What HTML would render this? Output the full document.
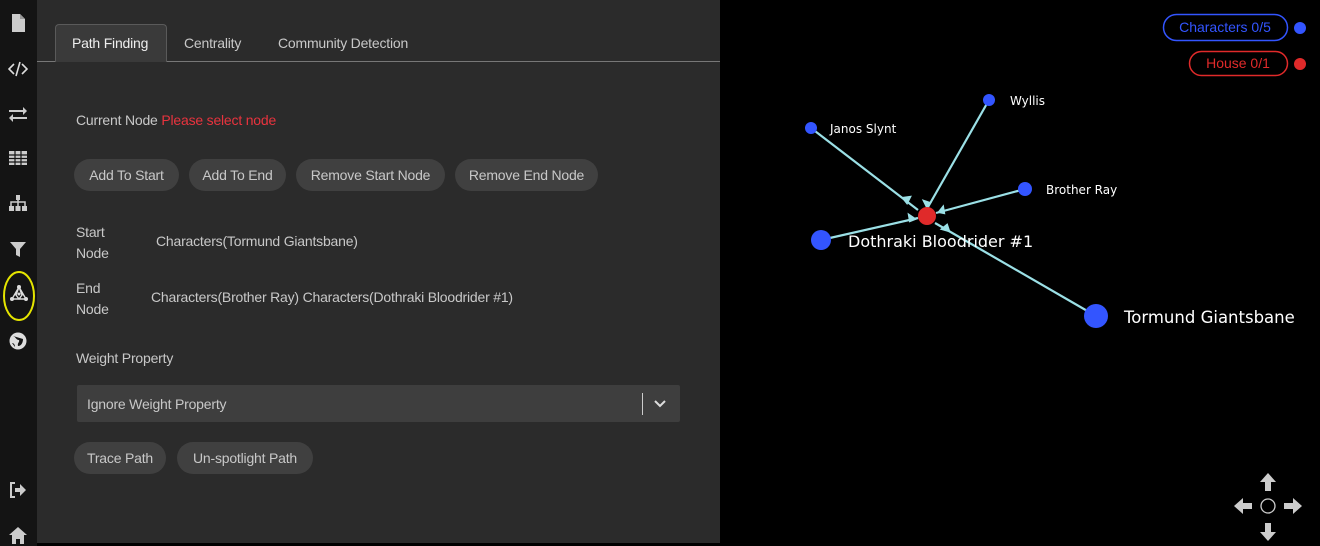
<!DOCTYPE html>
<html><head><style>
*{margin:0;padding:0;box-sizing:border-box}
body{width:1320px;height:546px;background:#000;font-family:"Liberation Sans",sans-serif;position:relative;overflow:hidden;color:#ccc}
#side{position:absolute;left:0;top:0;width:37px;height:546px;background:#141414}
#panel{position:absolute;left:37px;top:0;width:683px;height:543px;background:#2b2b2b}
.abs{position:absolute}
.btn{position:absolute;height:32px;border-radius:16px;background:#404040;color:#c8c8c8;font-size:14px;line-height:32px;text-align:center;letter-spacing:-0.2px}
.t{position:absolute;font-size:14px;color:#c8c8c8;white-space:nowrap;letter-spacing:-0.2px}
.ic{position:absolute;left:8px;width:20px;height:20px}
</style></head><body>
<div id="side">
<svg class="ic" style="top:13px" viewBox="0 0 20 20"><path d="M4 1h8l5 5v13H4z" fill="#ccc"/><path d="M12 1v5h5" fill="#999"/></svg>
<svg class="ic" style="top:59px" viewBox="0 0 20 20" fill="none" stroke="#ddd" stroke-width="1.6"><path d="M6 5L1 10l5 5M14 5l5 5-5 5M12 3L8 17"/></svg>
<svg class="ic" style="top:104px" viewBox="0 0 20 20" fill="#ccc"><path d="M1 6h14v-3l4 4-4 4v-3H1zM19 13H5v-3l-4 4 4 4v-3h14z"/></svg>
<svg class="ic" style="top:148px" viewBox="0 0 20 20" fill="#ccc"><path d="M1 3h18v14H1z"/><path d="M1 7h18M1 10.5h18M1 14h18M7 3v14M13 3v14" stroke="#141414" stroke-width="1.2"/></svg>
<svg class="ic" style="top:194px" viewBox="0 0 20 20" fill="#ccc"><rect x="8" y="1" width="4" height="5"/><path d="M3 12V8h14v4" fill="none" stroke="#ccc" stroke-width="1.5"/><path d="M10 6v6" stroke="#ccc" stroke-width="1.5"/><rect x="1" y="12" width="5" height="5"/><rect x="7.5" y="12" width="5" height="5"/><rect x="14" y="12" width="5" height="5"/></svg>
<svg class="ic" style="top:239px" viewBox="0 0 20 20" fill="#ccc"><path d="M2 3h16l-6 7v8l-4-2v-6z"/></svg>
<svg class="abs" style="left:2px;top:270px" width="36" height="52"><ellipse cx="17" cy="26" rx="15" ry="24" fill="none" stroke="#e5e500" stroke-width="2"/><g fill="none" stroke="#ddd" stroke-width="1.4"><path d="M17 17L10 29h14zM17 17l-3 8 3 4 3-4z"/></g><g fill="#ddd"><circle cx="17" cy="17" r="2"/><circle cx="10" cy="29" r="2"/><circle cx="24" cy="29" r="2"/><circle cx="17" cy="24" r="1.5"/></g></svg>
<svg class="ic" style="top:331px" viewBox="0 0 20 20"><circle cx="10" cy="10" r="8.5" fill="#ddd"/><path d="M5 5c3 1 3 4 6 4 1 2-2 3-1 6 3 0 5-3 5-7M4 12c2 0 3 2 3 4" fill="#141414"/></svg>
<svg class="ic" style="top:480px" viewBox="0 0 20 20"><path d="M7 3H3v14h4" fill="none" stroke="#ccc" stroke-width="2"/><path d="M7 8h5V4l6 6-6 6v-4H7z" fill="#ccc"/></svg>
<svg class="ic" style="top:525px" viewBox="0 0 20 20" fill="#ccc"><path d="M10 2L1 10h3v9h4v-5h4v5h4v-9h3z"/></svg>
</div>
<div id="panel">
<div class="abs" style="left:0;top:61px;width:683px;height:1px;background:#777"></div>
<div class="abs" style="left:18px;top:24px;width:112px;height:38px;background:#3a3a3a;border:1px solid #5a5a5a;border-bottom:none;border-radius:4px 4px 0 0"></div>
<div class="t" style="left:35px;top:35px;color:#eee">Path Finding</div>
<div class="t" style="left:147px;top:35px">Centrality</div>
<div class="t" style="left:241px;top:35px">Community Detection</div>
<div class="t" style="left:39px;top:112px">Current Node <span style="color:#e8333e">Please select node</span></div>
<div class="btn" style="left:37px;top:159px;width:105px">Add To Start</div>
<div class="btn" style="left:152px;top:159px;width:97px">Add To End</div>
<div class="btn" style="left:259px;top:159px;width:149px">Remove Start Node</div>
<div class="btn" style="left:418px;top:159px;width:143px">Remove End Node</div>
<div class="t" style="left:39px;top:222px;line-height:21px">Start<br>Node</div>
<div class="t" style="left:119px;top:233px">Characters(Tormund Giantsbane)</div>
<div class="t" style="left:39px;top:278px;line-height:21px">End<br>Node</div>
<div class="t" style="left:114px;top:289px">Characters(Brother Ray) Characters(Dothraki Bloodrider #1)</div>
<div class="t" style="left:39px;top:350px">Weight Property</div>
<div class="abs" style="left:40px;top:385px;width:603px;height:37px;background:#3e3e3e;border-radius:2px"></div>
<div class="t" style="left:50px;top:396px">Ignore Weight Property</div>
<div class="abs" style="left:605px;top:393px;width:1px;height:22px;background:#ccc"></div>
<svg class="abs" style="left:616px;top:397px" width="14" height="14"><path d="M2 4l5 5 5-5" fill="none" stroke="#ddd" stroke-width="2"/></svg>
<div class="btn" style="left:37px;top:442px;width:92px">Trace Path</div>
<div class="btn" style="left:140px;top:442px;width:136px">Un-spotlight Path</div>
</div>
<svg class="abs" style="left:0;top:0" width="1320" height="546">
<g stroke="#9be0e6" stroke-width="2.2" fill="#9be0e6">
<line x1="811" y1="128" x2="918" y2="210"/><line x1="989" y1="100" x2="928" y2="207"/><line x1="1025" y1="189" x2="936" y2="213"/><line x1="821" y1="240" x2="918" y2="218"/><line x1="1096" y1="316" x2="935" y2="223"/>
<path d="M907 203l3 -6 -7 1z" /><path d="M930 203l-6 -2 3 6z"/><path d="M939 212l4 -5 1 6z"/><path d="M915 219l-6 -4 1 6z"/><path d="M949 231l-2 -6 -5 4z"/>
</g>
<circle cx="811" cy="128" r="6" fill="#3355ff"/><circle cx="989" cy="100" r="6" fill="#3355ff"/><circle cx="1025" cy="189" r="7" fill="#3355ff"/><circle cx="821" cy="240" r="10" fill="#3355ff"/><circle cx="1096" cy="316" r="12" fill="#3355ff"/><circle cx="927" cy="216" r="9" fill="#e02a2a"/>
<g fill="#fff" font-family="DejaVu Sans,sans-serif">
<text x="830" y="133" font-size="12">Janos Slynt</text><text x="1010" y="105" font-size="12">Wyllis</text><text x="1046" y="194" font-size="12">Brother Ray</text>
<text x="848" y="247" font-size="16">Dothraki Bloodrider #1</text><text x="1124" y="323" font-size="16.5">Tormund Giantsbane</text></g>
<rect x="1163.5" y="14.5" width="124" height="26" rx="13" fill="none" stroke="#3355ff" stroke-width="1.5"/>
<text x="1225" y="32" font-size="14" fill="#3355ff" text-anchor="middle" font-family="Liberation Sans">Characters 0/5</text>
<circle cx="1300" cy="28" r="6" fill="#3355ff"/>
<rect x="1189.5" y="51.5" width="98" height="24" rx="12" fill="none" stroke="#e02a2a" stroke-width="1.5"/>
<text x="1238" y="68" font-size="14" fill="#e02a2a" text-anchor="middle" font-family="Liberation Sans">House 0/1</text>
<circle cx="1300" cy="64" r="6" fill="#e02a2a"/>
<g fill="#ccc"><path d="M1268 473l-8 9h5v9h6v-9h5z"/><path d="M1268 541l-8-9h5v-9h6v9h5z"/><path d="M1234 506l9-8v5h9v6h-9v5z"/><path d="M1302 506l-9-8v5h-9v6h9v5z"/></g>
<circle cx="1268" cy="506" r="7" fill="none" stroke="#ccc" stroke-width="1.3"/>
</svg>
</body></html>
